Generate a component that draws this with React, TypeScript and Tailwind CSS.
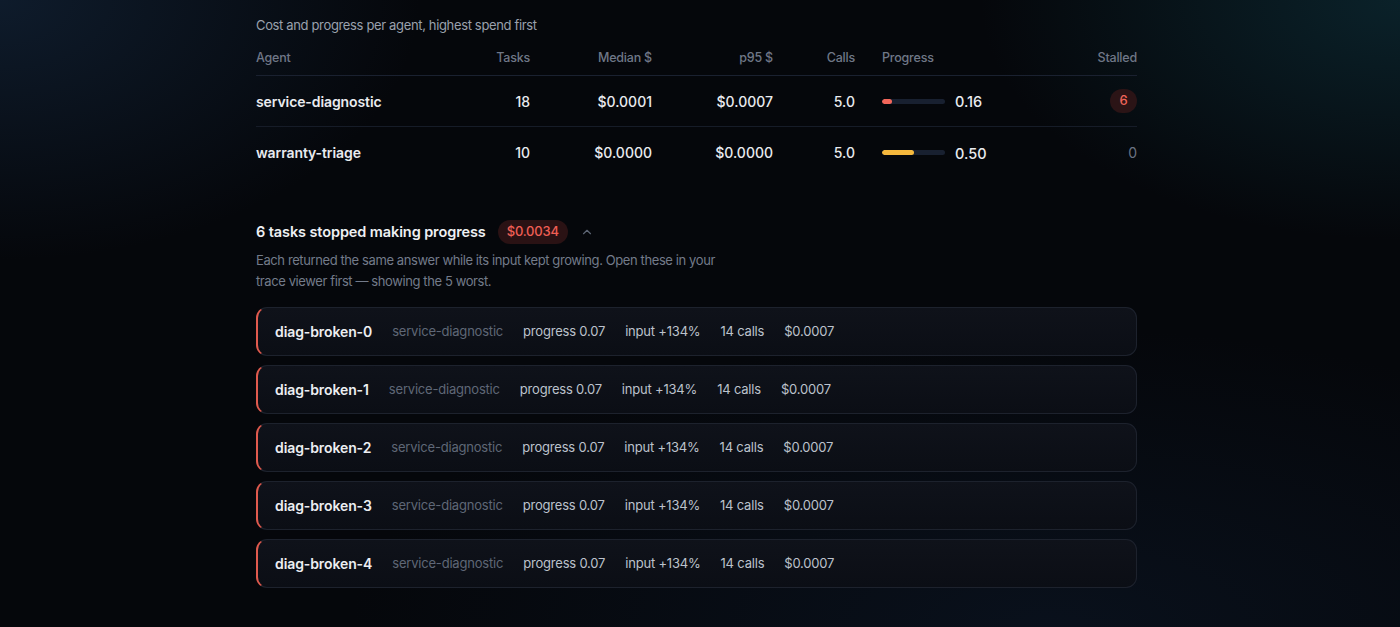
import { ChevronUp } from "lucide-react";

const agents = [
  { name: "service-diagnostic", tasks: 18, median: "$0.0001", p95: "$0.0007", calls: "5.0", progress: 0.16, bar: "bg-[#f2665a]", stalled: 6 },
  { name: "warranty-triage", tasks: 10, median: "$0.0000", p95: "$0.0000", calls: "5.0", progress: 0.5, bar: "bg-[#f5b83d]", stalled: 0 },
];

const stalledTasks = [0, 1, 2, 3, 4].map((i) => ({
  id: `diag-broken-${i}`,
  agent: "service-diagnostic",
  progress: "0.07",
  input: "+134%",
  calls: 14,
  cost: "$0.0007",
}));

const cols = "grid grid-cols-[194px_80px_122px_121px_82px_1fr_120px] items-center";

export default function App() {
  return (
    <div
      className="min-h-[627px] w-full bg-[#05070b] bg-[radial-gradient(ellipse_420px_260px_at_0%_0%,rgba(22,44,70,0.55),transparent),radial-gradient(ellipse_420px_240px_at_100%_0%,rgba(16,60,72,0.5),transparent),radial-gradient(ellipse_700px_300px_at_75%_100%,rgba(14,28,48,0.45),transparent)] text-[#e6e8ec]"
      style={{ fontFamily: "Inter, 'Noto Sans', sans-serif" }}
    >
      <div className="ml-[256px] w-[881px] pt-[16px] pb-[40px]">
        <p className="text-[13px] leading-[18px] tracking-[-0.35px] text-[#9aa1ad]">
          Cost and progress per agent, highest spend first
        </p>

        <div className="mt-[8px]">
          <div className={`${cols} h-[34px] border-b border-[#1a2130] text-[12.5px] font-medium tracking-[-0.2px] text-[#6f7787]`}>
            <span>Agent</span>
            <span className="text-right">Tasks</span>
            <span className="text-right">Median $</span>
            <span className="text-right">p95 $</span>
            <span className="text-right">Calls</span>
            <span className="pl-[27px]">Progress</span>
            <span className="text-right">Stalled</span>
          </div>
          {agents.map((a, idx) => (
            <div
              key={a.name}
              className={`${cols} h-[51px] text-[14px] font-medium text-[#e9ebef] ${idx === 0 ? "border-b border-[#161c28]" : ""}`}
            >
              <span className="font-semibold tracking-[-0.1px]">{a.name}</span>
              <span className="text-right">{a.tasks}</span>
              <span className="text-right">{a.median}</span>
              <span className="text-right">{a.p95}</span>
              <span className="text-right">{a.calls}</span>
              <div className="flex items-center gap-[10px] pl-[27px]">
                <div className="h-[5px] w-[63px] overflow-hidden rounded-full bg-[#182030]">
                  <div className={`h-full rounded-full ${a.bar}`} style={{ width: `${a.progress * 100}%` }} />
                </div>
                <span className="pt-[2px] text-[14.5px] font-medium">{a.progress.toFixed(2)}</span>
              </div>
              <div className="flex justify-end">
                {a.stalled > 0 ? (
                  <span className="flex h-[24px] w-[27px] items-center justify-center rounded-full bg-[#2b1416] text-[13px] font-medium text-[#f0655a]">
                    {a.stalled}
                  </span>
                ) : (
                  <span className="text-[14px] font-normal text-[#6b7383]">{a.stalled}</span>
                )}
              </div>
            </div>
          ))}
        </div>

        <div className="mt-[42px] flex items-center gap-[12px]">
          <h2 className="text-[14.5px] font-semibold tracking-[-0.1px] text-[#eef0f3]">6 tasks stopped making progress</h2>
          <span className="flex h-[24px] items-center rounded-full bg-[#2a1214] px-[9px] text-[13px] font-medium tracking-[-0.2px] text-[#ef5f55]">
            $0.0034
          </span>
          <ChevronUp className="h-[14px] w-[14px] text-[#5d6574]" strokeWidth={2} />
        </div>
        <p className="mt-[6px] max-w-[470px] text-[13px] leading-[21px] tracking-[-0.4px] text-[#737b8a]">
          Each returned the same answer while its input kept growing. Open these in your trace viewer first — showing the 5 worst.
        </p>

        <div className="mt-[15px] flex flex-col gap-[9px]">
          {stalledTasks.map((t) => (
            <div
              key={t.id}
              className="flex h-[49px] items-center gap-[20px] rounded-[11px] border border-l-2 border-[#1d222d] border-l-[#e05a4e] bg-gradient-to-b from-[#0f121a] to-[#0b0e15] pl-[17px] text-[13px] tracking-[-0.2px]"
            >
              <span className="text-[14px] font-semibold tracking-[-0.1px] text-[#eceef1]">{t.id}</span>
              <span className="text-[#5f6776]">{t.agent}</span>
              <span className="text-[#bcc2cc]">progress {t.progress}</span>
              <span className="text-[#bcc2cc]">input {t.input}</span>
              <span className="text-[#bcc2cc]">{t.calls} calls</span>
              <span className="text-[#bcc2cc]">{t.cost}</span>
            </div>
          ))}
        </div>
      </div>
    </div>
  );
}
